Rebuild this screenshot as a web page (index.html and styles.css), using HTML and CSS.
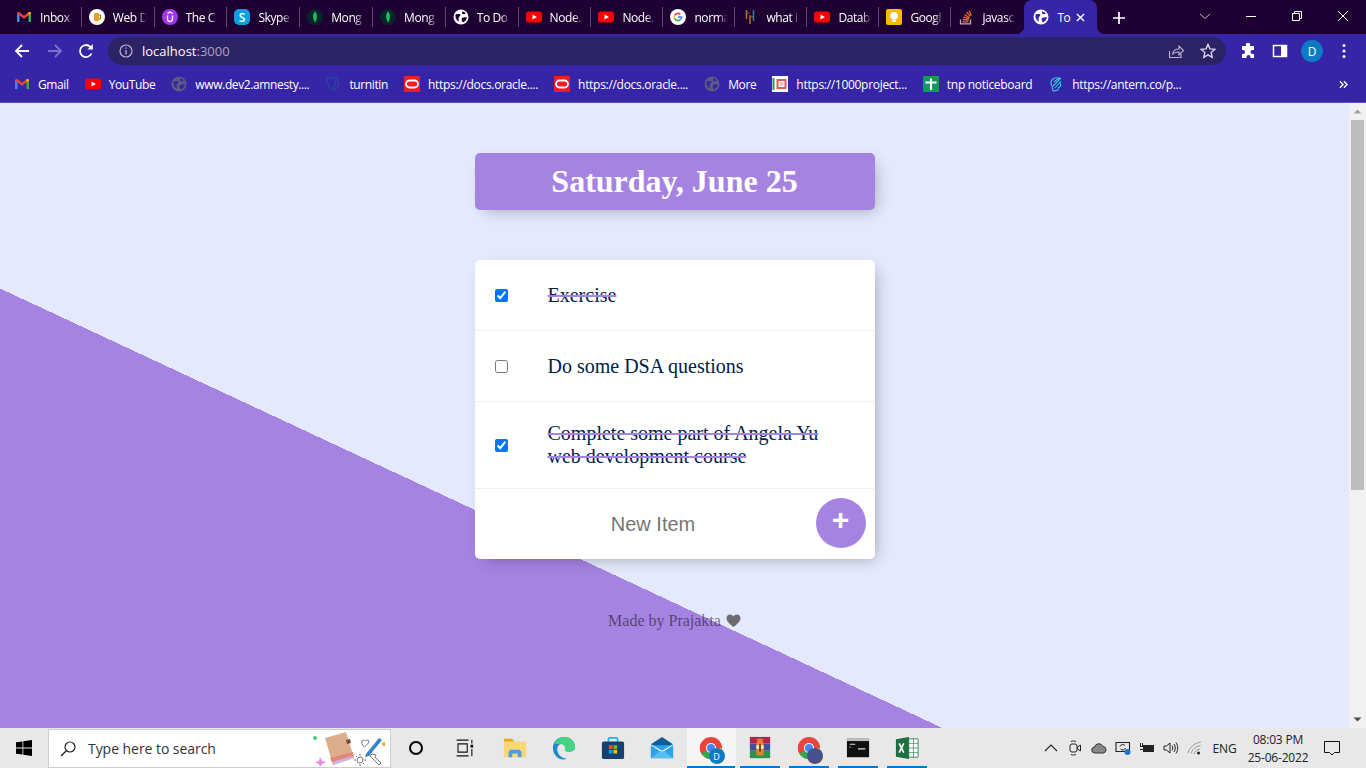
FILE: index.html
```html
<!DOCTYPE html>
<html lang="en">
<head>
  <meta charset="UTF-8">
  <meta name="viewport" content="width=device-width, initial-scale=1.0">
  <link rel="stylesheet" href="styles.css">
  <title>To Do List</title>
</head>
<body>

  <svg class="defs" aria-hidden="true">
    <symbol id="gmail" viewBox="0 0 16 16">
      <path d="M1 13V4l2.500 1.800V13z" fill="#4285f4"/>
      <path d="M15 13V4l-2.500 1.800V13z" fill="#34a853"/>
      <path d="M1 4.500C1 3 2.500 2.500 3.500 3.300L8 6.700l4.500-3.400C13.500 2.500 15 3 15 4.500L12.500 6.500 8 9.800 3.500 6.500z" fill="#ea4335"/>
      <path d="M12.500 3.300C13.500 2.500 15 3 15 4.500L12.500 6.500z" fill="#fbbc04"/>
    </symbol>
    <symbol id="youtube" viewBox="0 0 16 16">
      <rect y="2.500" width="16" height="11" rx="3" fill="#f00"/>
      <path d="M6.500 5.500v5L11 8z" fill="#fff"/>
    </symbol>
    <symbol id="globe" viewBox="0 0 16 16">
      <circle cx="8" cy="8" r="7.500" fill="currentColor"/>
      <path d="M2.500 5.500c2-1 3 0 4.500-.5 1 1 0 2-1 3-1 2 0 3 0 4.500-2-1-3-2.500-3.500-4.500zM9 9c2-1 3.500-1 5-.5-.5 2-2 4-4 5-1-1-2-3-1-4.500zM9 2.500c1.500 0 3 .8 3.800 2-1 1-2.800 1-3.800 0z" fill="var(--land)"/>
    </symbol>
    <symbol id="oracle" viewBox="0 0 16 16">
      <rect width="16" height="16" fill="#ee1c25"/>
      <rect x="2" y="4.500" width="12" height="7" rx="3.500" fill="none" stroke="#fff" stroke-width="1.800"/>
    </symbol>
    <symbol id="mongo" viewBox="0 0 16 16">
      <circle cx="8" cy="8" r="8" fill="#07262b"/>
      <path d="M8 2.500C10.500 5 10.500 9.500 8 13.500 5.500 9.500 5.500 5 8 2.500z" fill="#13c55c"/>
    </symbol>
    <symbol id="chrome" viewBox="0 0 26 26">
      <circle cx="13" cy="13" r="12" fill="#e8453c"/>
      <path d="M13 13L2.600 19A12 12 0 0 1 3 6.300z" fill="#e8453c"/>
      <path d="M13 13h12a12 12 0 0 1-12 12l-2-1z" fill="#f9bc15"/>
      <path d="M13 13L19 23.400A12 12 0 0 1 2.600 19z" fill="#34a853"/>
      <circle cx="13" cy="13" r="5.500" fill="#fff"/>
      <circle cx="13" cy="13" r="4.300" fill="#4285f4"/>
    </symbol>
  </svg>

  <div class="tabstrip">
    <div class="tab"><svg class="ico"><use href="#gmail"/></svg><span class="tab-name">Inbox</span></div>
    <div class="tab">
      <svg class="ico" viewBox="0 0 16 16"><circle cx="8" cy="8" r="8" fill="#fff"/><rect x="5" y="4" width="5" height="8" rx="1" fill="#e2a024"/><path d="M10 6h1.500v4H10" fill="none" stroke="#8a6a20"/></svg>
      <span class="tab-name">Web D</span>
    </div>
    <div class="tab">
      <svg class="ico" viewBox="0 0 16 16"><circle cx="8" cy="8" r="8" fill="#a435f0"/><path d="M5.500 6.500V10a2.500 2.500 0 0 0 5 0V6.500M5.500 4.500L8 3l2.500 1.500" fill="none" stroke="#fff" stroke-width="1.300"/></svg>
      <span class="tab-name">The C</span>
    </div>
    <div class="tab">
      <svg class="ico" viewBox="0 0 16 16"><rect width="16" height="16" rx="5" fill="#0a9fe0"/><text x="8" y="12.500" class="skype-s">S</text></svg>
      <span class="tab-name">Skype</span>
    </div>
    <div class="tab"><svg class="ico"><use href="#mongo"/></svg><span class="tab-name">Mong</span></div>
    <div class="tab"><svg class="ico"><use href="#mongo"/></svg><span class="tab-name">Mong</span></div>
    <div class="tab"><svg class="ico globe-tab"><use href="#globe"/></svg><span class="tab-name">To Do</span></div>
    <div class="tab"><svg class="ico"><use href="#youtube"/></svg><span class="tab-name">Node.</span></div>
    <div class="tab"><svg class="ico"><use href="#youtube"/></svg><span class="tab-name">Node.</span></div>
    <div class="tab">
      <svg class="ico" viewBox="0 0 16 16"><circle cx="8" cy="8" r="8" fill="#fff"/><path d="M8 3.500a4.500 4.500 0 0 1 3 1.200l-1.200 1.200A2.800 2.800 0 0 0 5.400 7L4 6a4.500 4.500 0 0 1 4-2.500z" fill="#ea4335"/><path d="M4 6l1.400 1a2.800 2.800 0 0 0 0 2L4 10a4.500 4.500 0 0 1 0-4z" fill="#fbbc04"/><path d="M4 10l1.400-1A2.800 2.800 0 0 0 10 10l1.200 1A4.500 4.500 0 0 1 4 10z" fill="#34a853"/><path d="M12.500 7.200H8v1.700h2.700a2 2 0 0 1-.7 1.100l1.200 1a4.500 4.500 0 0 0 1.300-3.800z" fill="#4285f4"/></svg>
      <span class="tab-name">norma</span>
    </div>
    <div class="tab">
      <svg class="ico" viewBox="0 0 16 16"><path d="M4.500 1v9M8 6v9" stroke="#b5702c" stroke-width="1.500"/><path d="M11.500 1v11" stroke="#2f86a8" stroke-width="1.500"/><path d="M4.500 4h3M8 8h3.500" stroke="#8a6a40"/></svg>
      <span class="tab-name">what i</span>
    </div>
    <div class="tab"><svg class="ico"><use href="#youtube"/></svg><span class="tab-name">Datab</span></div>
    <div class="tab">
      <svg class="ico" viewBox="0 0 16 16"><rect width="16" height="16" rx="2" fill="#fbb900"/><circle cx="8" cy="6.800" r="3.800" fill="#fff"/><rect x="6.200" y="10.500" width="3.600" height="2.500" fill="#fff"/></svg>
      <span class="tab-name">Googl</span>
    </div>
    <div class="tab tab-last">
      <svg class="ico" viewBox="0 0 16 16"><path d="M2.500 10.500v4.300h10v-4.300" fill="none" stroke="#b9b4b0" stroke-width="1.300"/><path d="M4.500 12.800h6M4.700 10.500l6 .5M5.300 8.200l5.800 1.500M6.500 5.800l5.200 3M8.500 3.200l4 4.200M11 1.500l2.300 5" stroke="#e8711d" stroke-width="1.300"/></svg>
      <span class="tab-name">javasc</span>
    </div>
    <div class="tab-active">
      <svg class="ico globe-active"><use href="#globe"/></svg>
      <span class="tab-name">To</span>
      <svg class="tab-close" viewBox="0 0 10 10"><path d="M1 1l8 8M9 1l-8 8" stroke="#fff" stroke-width="1.500"/></svg>
    </div>
    <svg class="new-tab" viewBox="0 0 12 12"><path d="M6 0v12M0 6h12" stroke="#fff" stroke-width="1.700"/></svg>
    <div class="win-controls">
      <button class="win-btn"><svg viewBox="0 0 12 12"><path d="M1 4l5 4.500L11 4" fill="none" stroke="#bdb4c4"/></svg></button>
      <button class="win-btn"><svg viewBox="0 0 12 12"><path d="M1 6.500h10" stroke="#fff"/></svg></button>
      <button class="win-btn"><svg viewBox="0 0 12 12"><path d="M1.500 3.500h7v7h-7zM3.500 3.500v-2h7v7h-2" fill="none" stroke="#fff"/></svg></button>
      <button class="win-btn"><svg viewBox="0 0 12 12"><path d="M1 1l10 10M11 1L1 11" stroke="#fff"/></svg></button>
    </div>
  </div>

  <div class="toolbar">
    <svg class="tool-ico" viewBox="0 0 16 16"><path d="M15 8H2M8 2L2 8l6 6" fill="none" stroke="#fff" stroke-width="1.800"/></svg>
    <svg class="tool-ico" viewBox="0 0 16 16"><path d="M1 8h13M8 2l6 6-6 6" fill="none" stroke="#7c70c8" stroke-width="1.800"/></svg>
    <svg class="tool-ico reload" viewBox="0 0 16 16"><path d="M13.500 10.500A6 6 0 1 1 12.300 3.800L14 5.500" fill="none" stroke="#fff" stroke-width="1.800"/><path d="M14.800 1v5.500H9.300z" fill="#fff"/></svg>
    <div class="omnibox">
      <svg class="info" viewBox="0 0 14 14"><circle cx="7" cy="7" r="6" fill="none" stroke="#b9b5d0" stroke-width="1.200"/><path d="M7 6v4.500M7 3.500v1.300" stroke="#b9b5d0" stroke-width="1.300"/></svg>
      <span class="url">localhost<span class="url-port">:3000</span></span>
      <svg class="omni-ico" viewBox="0 0 16 16"><path d="M1.500 8v6.500h11.500V11" fill="none" stroke="#b9b5d0" stroke-width="1.100"/><path d="M4.500 11.500c.5-3.500 3-5.500 6.500-5.500V3l4.500 4.500L11 12V9c-2.500 0-5 .5-6.500 2.500z" fill="none" stroke="#b9b5d0" stroke-width="1.100"/></svg>
      <svg class="omni-ico" viewBox="0 0 16 16"><path d="M8 1.500l2 4.400 4.800.5-3.600 3.200 1 4.700L8 11.900l-4.200 2.400 1-4.700L1.200 6.400 6 5.900z" fill="none" stroke="#d8d5e8" stroke-width="1.400"/></svg>
    </div>
    <div class="tool-right">
      <svg class="tool-ico" viewBox="0 0 16 16"><path d="M6 1.500a2 2 0 0 1 4 0V3h4v4h-1.500a2 2 0 0 0 0 4H14v4h-3.500v-1a2 2 0 0 0-4 0v1H2v-4h1a2 2 0 0 0 0-4H2V3h4z" fill="#fff"/></svg>
      <svg class="tool-ico" viewBox="0 0 16 16"><rect x="1.500" y="2.500" width="13" height="11" fill="none" stroke="#fff" stroke-width="1.500"/><rect x="9" y="2.500" width="5.500" height="11" fill="#fff"/></svg>
      <span class="avatar">D</span>
      <svg class="tool-ico" viewBox="0 0 16 16"><circle cx="8" cy="2.500" r="1.500" fill="#fff"/><circle cx="8" cy="8" r="1.500" fill="#fff"/><circle cx="8" cy="13.500" r="1.500" fill="#fff"/></svg>
    </div>
  </div>

  <div class="bookmarks">
    <a class="bm"><svg class="ico"><use href="#gmail"/></svg>Gmail</a>
    <a class="bm"><svg class="ico"><use href="#youtube"/></svg>YouTube</a>
    <a class="bm"><svg class="ico globe-bm"><use href="#globe"/></svg>www.dev2.amnesty....</a>
    <a class="bm">
      <svg class="ico" viewBox="0 0 16 16"><path d="M2 2.500l7-1.500 2 1-1 7-3 4-3-1.500zM11 3c4 2 3 9-3 12" fill="none" stroke="#1d4f9c" stroke-width="1.100"/></svg>
      turnitin
    </a>
    <a class="bm bm-url"><svg class="ico"><use href="#oracle"/></svg>https://docs.oracle....</a>
    <a class="bm bm-url"><svg class="ico"><use href="#oracle"/></svg>https://docs.oracle....</a>
    <a class="bm"><svg class="ico globe-bm"><use href="#globe"/></svg>More</a>
    <a class="bm bm-url">
      <svg class="ico" viewBox="0 0 16 16"><rect width="16" height="16" fill="#fff"/><path d="M1.500 2v12" stroke="#2a9a4a" stroke-width="2"/><rect x="4.500" y="3" width="10" height="10" fill="#e4574c"/><rect x="7" y="5.500" width="5" height="5" fill="#f5c6c0" stroke="#fff"/></svg>
      https://1000project...
    </a>
    <a class="bm bm-url">
      <svg class="ico" viewBox="0 0 16 16"><rect width="16" height="16" rx="1" fill="#0f9d58"/><path d="M2.500 6.500h11M8 2.500V14" stroke="#fff" stroke-width="2"/></svg>
      tnp noticeboard
    </a>
    <a class="bm bm-url">
      <svg class="ico" viewBox="0 0 16 16"><path d="M12 2.500C8 .5 3 2.500 3 7c0 2 1 3 1.500 4.500L5 15l5-1 .5-2.500 2-1V7M5 10l8-8M6 6l5-4M7 12l6-7" fill="none" stroke="#38c6d8" stroke-width="1.100"/></svg>
      https://antern.co/p...
    </a>
    <svg class="bm-more" viewBox="0 0 10 10"><path d="M1 1.500L4.500 5 1 8.500M5.500 1.500L9 5 5.500 8.500" fill="none" stroke="#fff" stroke-width="1.500"/></svg>
  </div>

  <div class="viewport">
    <div class="page">
      <div class="sheet">
        <div class="box heading">
          <h1>Saturday, June 25</h1>
        </div>

        <div class="box">
          <div class="item">
            <input type="checkbox" checked>
            <p>Exercise</p>
          </div>
          <div class="item">
            <input type="checkbox">
            <p>Do some DSA questions</p>
          </div>
          <div class="item">
            <input type="checkbox" checked>
            <p>Complete some part of Angela Yu web development course</p>
          </div>
          <form class="item new-item">
            <input type="text" placeholder="New Item">
            <button type="button">+</button>
          </form>
        </div>

        <footer>
          Made by Prajakta
          <svg class="heart" viewBox="0 0 16 14"><path d="M8 14C3 10 .5 7.500.5 4.300.5 2 2.200.5 4.300.5 5.800.5 7.200 1.300 8 2.700 8.800 1.300 10.200.5 11.700.5c2.100 0 3.800 1.500 3.800 3.800C15.500 7.500 13 10 8 14z"/></svg>
        </footer>
      </div>
    </div>
    <div class="scrollbar">
      <svg class="scroll-arrow" viewBox="0 0 17 17"><path d="M4.500 10.500L8.500 6.500l4 4z" fill="#a3a3a3"/></svg>
      <div class="scroll-track"><div class="scroll-thumb"></div></div>
      <svg class="scroll-arrow" viewBox="0 0 17 17"><path d="M4.500 6.500l4 4 4-4z" fill="#505050"/></svg>
    </div>
  </div>

  <div class="taskbar">
    <div class="start">
      <svg viewBox="0 0 16 16" width="16" height="16"><path d="M0 2.300l6.500-.9v6.200H0zM7.300 1.300L16 0v7.600H7.300zM0 8.400h6.500v6.200L0 13.700zM7.300 8.400H16V16l-8.700-1.300z" fill="#000"/></svg>
    </div>
    <div class="search">
      <svg class="search-ico" viewBox="0 0 16 16"><circle cx="10" cy="6" r="5" fill="none" stroke="#222" stroke-width="1.200"/><path d="M6.300 9.700L1 15" stroke="#222" stroke-width="1.400"/></svg>
      <span class="search-text">Type here to search</span>
      <svg class="search-art" viewBox="0 0 72 36">
        <circle cx="2" cy="7" r="2" fill="#3ed07a"/>
        <path d="M12 7L33 1l8 26-21 7z" fill="#dcae8c"/>
        <path d="M17 27l23-6 1 5-21 7z" fill="#e2877a"/>
        <path d="M19 31l21-6 1 2-21 7z" fill="#cdb4e4"/>
        <path d="M33 9l4-1 1 4-4 1z" fill="#7a4a38"/>
        <path d="M49 10c2-2 3 0 3 0s3-2 4 0c0 3-5 6-5 6s-3-3-2-6z" fill="none" stroke="#777"/>
        <path d="M53 23L66 7l3 2-13 16-4 1z" fill="#3a82c8"/>
        <circle cx="71" cy="13" r="2" fill="#f4a81c"/>
        <path d="M7 26l2 4 4 1-4 2-2 3-1-3-4-2 4-1z" fill="#e58af0"/>
        <circle cx="47" cy="29" r="3" fill="none" stroke="#777"/>
        <path d="M47 23v2M47 33v2M41 29h2M51 29h2M43 25l1 1M51 33l-1-1" stroke="#777"/>
        <path d="M57 25l3 3 6 6 2-2-6-6 1-2-4-1z" fill="none" stroke="#777"/>
      </svg>
    </div>
    <div class="task-slot"><svg class="task-ico" viewBox="0 0 26 26"><circle cx="13" cy="13" r="6.500" fill="none" stroke="#000" stroke-width="2.200"/></svg></div>
    <div class="task-slot">
      <svg class="task-ico" viewBox="0 0 26 26"><path d="M5 4.500h13M5 21.500h13M6.500 8.500h10v9h-10zM21.500 4v4M21.500 14v8" fill="none" stroke="#111" stroke-width="1.200"/><rect x="20" y="9.500" width="3" height="3" fill="#111"/></svg>
    </div>
    <div class="app-slot first-app">
      <svg class="task-ico" viewBox="0 0 26 26"><path d="M1 3h9l2 3h13v17H1z" fill="#f8d775"/><path d="M1 3h9l2 3H1z" fill="#e5a923"/><path d="M6 23v-6l2-2h10l2 2v6h-4v-4h-6v4z" fill="#4a9fdc"/></svg>
    </div>
    <div class="app-slot">
      <svg class="task-ico" viewBox="0 0 26 26"><path d="M1 13C1 6 6.500 1 13 1c7 0 12 5 12 11 0 3.500-3 5-6 5-2.500 0-5-.8-5-2.500 0-1 1-1.500 1-3 0-2-2-3-4-3-4 0-6 4-5 8 1 5 6 8.500 11 8-2 .8-3.500 1-5 1C6 25 1 20 1 13z" fill="#1b8bc9"/><path d="M3 8c2-5 7-7 11-7 6 0 11 5 11 11 0 3.500-3 5-6 5-2.500 0-5-.8-5-2.500 1-4-3-6-6-6-2 0-4 .5-5-.5z" fill="#47d27f"/></svg>
    </div>
    <div class="app-slot">
      <svg class="task-ico" viewBox="0 0 26 26"><path d="M8 7V3.500a1.500 1.500 0 0 1 1.500-1.500h7A1.500 1.500 0 0 1 18 3.500V7" fill="none" stroke="#1ab3e8" stroke-width="1.800"/><rect x="1" y="6" width="24" height="19" rx="2" fill="#15406f"/><rect x="8.500" y="10" width="4" height="4" fill="#f25022"/><rect x="13.500" y="10" width="4" height="4" fill="#7fba00"/><rect x="8.500" y="15" width="4" height="4" fill="#00a4ef"/><rect x="13.500" y="15" width="4" height="4" fill="#ffb900"/></svg>
    </div>
    <div class="app-slot">
      <svg class="task-ico" viewBox="0 0 26 26"><path d="M1 9L13 1l12 8v14H1z" fill="#0f5e9c"/><path d="M1 10h24v14H1z" fill="#2aa3ea"/><path d="M1 10l12 8 12-8v-1L13 16 1 9z" fill="#e6f4fd"/><path d="M1 24l10-8 2 1 2-1 10 8z" fill="#55bdf0"/></svg>
    </div>
    <div class="app-slot running app-active">
      <svg class="task-ico" viewBox="0 0 26 26"><use href="#chrome"/></svg>
      <span class="chrome-badge">D</span>
    </div>
    <div class="app-slot running">
      <svg class="task-ico" viewBox="0 0 26 26"><rect x="2" y="1" width="22" height="7" fill="#b2244f"/><rect x="2" y="8" width="22" height="8" fill="#40509c"/><rect x="2" y="16" width="22" height="8" fill="#2f8f4e"/><path d="M10 3h6v3l1 2v13h-8V8l1-2z" fill="#d8862c"/><rect x="9" y="10" width="8" height="4" fill="#f0e4c0"/><rect x="12" y="9" width="2" height="8" fill="#7a3a10"/></svg>
    </div>
    <div class="app-slot running">
      <svg class="task-ico" viewBox="0 0 26 26"><use href="#chrome"/></svg>
      <span class="chrome-badge chrome-badge-plain"></span>
    </div>
    <div class="app-slot running">
      <svg class="task-ico" viewBox="0 0 26 26"><rect x="1" y="3" width="24" height="20" fill="#111"/><rect x="1" y="3" width="24" height="2.500" fill="#bfbfbf"/><path d="M4 9h6M4 12h1M13 14h8" stroke="#ddd" stroke-width="1.200"/></svg>
    </div>
    <div class="app-slot running">
      <svg class="task-ico" viewBox="0 0 26 26"><path d="M9 3h16v20H9z" fill="#fff" stroke="#3a8a5c"/><path d="M15 3v20M20 3v20M9 8h16M9 13h16M9 18h16" stroke="#3a8a5c" stroke-width=".8"/><path d="M1 3.500L15 1v24L1 22.500z" fill="#1d6f42"/><path d="M4.500 8l5 10M9.500 8l-5 10" stroke="#fff" stroke-width="1.800"/></svg>
    </div>

    <div class="tray">
      <svg class="tray-ico" viewBox="0 0 16 16"><path d="M2 11l6-6 6 6" fill="none" stroke="#222" stroke-width="1.100"/></svg>
      <svg class="tray-ico" viewBox="0 0 16 16"><rect x="3" y="4" width="7" height="8" rx="2" fill="none" stroke="#222"/><path d="M10.500 7l3-2v6l-3-2zM4 1.500c2-.7 3-.7 5 0M4 14.500c2 .7 3 .7 5 0" fill="none" stroke="#222"/></svg>
      <svg class="tray-ico" viewBox="0 0 16 16"><path d="M4 13a3 3 0 0 1-.5-6A4.500 4.500 0 0 1 12 6.500 3.300 3.300 0 0 1 12.500 13z" fill="#888" stroke="#333"/></svg>
      <svg class="tray-ico" viewBox="0 0 16 16"><path d="M1 2.500h13.500v9H1z" fill="none" stroke="#222" stroke-width="1.100"/><path d="M5 6.500a3 3 0 0 1 5-1M10.500 8a3 3 0 0 1-5 1" fill="none" stroke="#222"/><circle cx="12.500" cy="12" r="3" fill="#1a73c8"/></svg>
      <svg class="tray-ico" viewBox="0 0 16 16"><rect x="4" y="5" width="11" height="7" fill="#222"/><path d="M1 6.500h3M1 9.500h3M1.500 3v3M3.500 3v3" stroke="#222" fill="none"/></svg>
      <svg class="tray-ico" viewBox="0 0 16 16"><path d="M1 6v4h2.500L7 13V3L3.500 6zM9 5.500c1 1.500 1 3.500 0 5M11 4c1.700 2.500 1.700 5.500 0 8M13 2.500c2.300 3.500 2.300 7.500 0 11" fill="none" stroke="#222"/></svg>
      <svg class="tray-ico" viewBox="0 0 16 16"><path d="M1 13C2 8 7 3 14 2M4 13.500c1-3.500 4-7 9.500-8M7 14c.6-2 2.500-4.500 6-5" fill="none" stroke="#999"/><circle cx="11.500" cy="13" r="1.500" fill="#222"/></svg>
      <span class="tray-lang">ENG</span>
      <div class="clock">
        <span>08:03 PM</span>
        <span>25-06-2022</span>
      </div>
      <div class="notif">
        <svg viewBox="0 0 16 16" width="16" height="16"><path d="M.5 1.500h15v11h-5l-2.500 2.500-2.500-2.500h-5z" fill="none" stroke="#111"/></svg>
      </div>
    </div>
  </div>

</body>
</html>
```
FILE: styles.css
```css
html, body {
  height: 100%;
}

body {
  margin: 0;
  display: flex;
  flex-direction: column;
  height: 768px;
  overflow: hidden;
  font-family: 'Open Sans', 'Noto Sans', sans-serif;
}

.defs {
  display: none;
}

.ico {
  width: 16px;
  height: 16px;
  flex: none;
}

/* browser tabs */
.tabstrip {
  display: flex;
  align-items: center;
  height: 34px;
  flex: none;
  padding-left: 9px;
  background: #1f0033;
  color: #fff;
}

.tab {
  display: flex;
  align-items: center;
  gap: 8px;
  width: 72.8px;
  height: 20px;
  padding-left: 7px;
  box-sizing: border-box;
  border-right: 1px solid #5d4a6c;
}

.tab:nth-child(n+9) {
  width: 72px;
}

.tab.tab-last {
  width: 73px;
  border-right: none;
}

.tab-name {
  width: 34px;
  overflow: hidden;
  white-space: nowrap;
  font-size: 12px;
  letter-spacing: -0.4px;
  -webkit-mask-image: linear-gradient(90deg, #000 70%, transparent);
  mask-image: linear-gradient(90deg, #000 70%, transparent);
}

.globe-tab {
  color: #fff;
  --land: #1f0033;
}

.globe-active {
  color: #fff;
  --land: #3725a8;
}

.globe-bm {
  color: #5c5a80;
  --land: #3725a8;
}

.skype-s {
  font-family: 'Open Sans', sans-serif;
  font-size: 12px;
  font-weight: 600;
  text-anchor: middle;
  fill: #fff;
}

.tab-active {
  position: relative;
  display: flex;
  align-items: center;
  gap: 8px;
  align-self: flex-end;
  height: 34px;
  width: 73px;
  padding-left: 9px;
  box-sizing: border-box;
  border-radius: 8px 8px 0 0;
  background: #3725a8;
}

.tab-active::before,
.tab-active::after {
  content: "";
  position: absolute;
  bottom: 0;
  width: 8px;
  height: 8px;
}

.tab-active::before {
  left: -8px;
  background: radial-gradient(circle at 0 0, transparent 8px, #3725a8 8.500px);
}

.tab-active::after {
  right: -8px;
  background: radial-gradient(circle at 100% 0, transparent 8px, #3725a8 8.500px);
}

.tab-active .tab-name {
  width: 14px;
  -webkit-mask-image: none;
  mask-image: none;
}

.tab-close {
  width: 9px;
  height: 9px;
  margin-left: -3px;
}

.new-tab {
  width: 12px;
  height: 12px;
  margin-left: 16px;
  margin-top: 1px;
}

.win-controls {
  display: flex;
  margin-left: auto;
}

.win-btn {
  width: 46px;
  height: 30px;
  padding: 0;
  border: none;
  background: none;
}

.win-btn svg {
  width: 12px;
  height: 12px;
}

/* address bar */
.toolbar {
  display: flex;
  align-items: center;
  height: 33px;
  flex: none;
  padding: 1px 0 0 14px;
  box-sizing: border-box;
  gap: 17px;
  background: #3725a8;
}

.tool-ico {
  width: 16px;
  height: 16px;
  flex: none;
}

.reload {
  margin-left: -2px;
}

.omnibox {
  display: flex;
  align-items: center;
  width: 1118px;
  height: 28px;
  margin-left: -3px;
  padding: 0 10px 0 11px;
  box-sizing: border-box;
  border-radius: 14px;
  background: #2c2266;
}

.info {
  width: 14px;
  height: 14px;
}

.url {
  margin-left: 9px;
  margin-right: auto;
  font-size: 13px;
  color: #fff;
}

.url-port {
  color: #a9a5c4;
}

.omni-ico {
  width: 16px;
  height: 16px;
  margin-left: 16px;
}

.tool-right {
  display: flex;
  align-items: center;
  gap: 16px;
  margin-left: -3px;
}

.avatar {
  display: flex;
  align-items: center;
  justify-content: center;
  width: 22px;
  height: 22px;
  margin: 0 -3px;
  border-radius: 50%;
  background: #0b7cc4;
  color: #fff;
  font-size: 12px;
}

/* bookmarks */
.bookmarks {
  display: flex;
  align-items: center;
  gap: 16px;
  height: 36px;
  flex: none;
  padding: 0 0 1px 14px;
  box-sizing: border-box;
  border-bottom: 1px solid #5a4ec0;
  background: #3725a8;
}

.bm {
  display: flex;
  align-items: center;
  gap: 8px;
  color: #fff;
  font-size: 12px;
  letter-spacing: -0.38px;
  white-space: nowrap;
}

.bm-url {
  letter-spacing: -0.3px;
}

.bm-more {
  width: 9px;
  height: 9px;
  margin-left: auto;
  margin-right: 18px;
}

/* the page itself */
.viewport {
  display: flex;
  flex: 1;
  min-height: 0;
}

.page {
  flex: 1;
  overflow: hidden;
}

.sheet {
  display: flow-root;
  min-height: 1000px;
  background-color: #e4e9fd;
  background-image: linear-gradient(25deg, #a683e3 50%, #e4e9fd 50%);
  font-family: 'Liberation Serif', serif;
}

.box {
  max-width: 400px;
  margin: 50px auto;
  border-radius: 5px;
  background: white;
  box-shadow: 5px 5px 15px -5px rgba(0, 0, 0, 0.3);
}

.heading {
  background-color: #a683e3;
  text-align: center;
}

h1 {
  margin: 0;
  padding: 10px;
  color: #fff;
  font-size: 32px;
}

.item {
  display: flex;
  align-items: center;
  min-height: 70px;
  border-bottom: 1px solid #f1f1f1;
}

.item:last-child {
  border-bottom: 0;
}

input[type="checkbox"] {
  margin: 20px;
  flex: none;
}

p {
  margin: 0;
  padding: 20px;
  color: #00204a;
  font-size: 20px;
  font-weight: 200;
}

input:checked + p {
  text-decoration: line-through;
  text-decoration-color: #a683e3;
}

.new-item {
  gap: 4px;
  margin-left: 20px;
}

input[type="text"] {
  width: 313px;
  height: 60px;
  padding: 1px 2px;
  border: none;
  outline: none;
  text-align: center;
  font-family: 'Liberation Sans', sans-serif;
  font-size: 20px;
}

.new-item button {
  width: 50px;
  min-height: 50px;
  margin-bottom: 2px;
  padding: 0 0 6px;
  border: none;
  border-radius: 50%;
  background-color: #a683e3;
  color: #fff;
  font-family: 'Liberation Sans', sans-serif;
  font-size: 30px;
  font-weight: 700;
}

footer {
  padding-top: 3px;
  color: rgba(0, 0, 0, 0.5);
  font-size: 16px;
  text-align: center;
}

.heart {
  width: 15px;
  height: 13px;
  margin-left: 1px;
  vertical-align: -1px;
  fill: #6c6c70;
}

/* scrollbar */
.scrollbar {
  display: flex;
  flex-direction: column;
  width: 17px;
  flex: none;
  background: #f1f1f1;
}

.scroll-arrow {
  width: 17px;
  height: 17px;
  flex: none;
}

.scroll-track {
  flex: 1;
  padding: 0 2px;
}

.scroll-thumb {
  height: 370px;
  background: #bdbdbd;
}

/* windows taskbar */
.taskbar {
  display: flex;
  align-items: center;
  height: 40px;
  flex: none;
  background: #e8e8e8;
}

.start {
  display: flex;
  align-items: center;
  justify-content: center;
  width: 48px;
  height: 100%;
  flex: none;
}

.search {
  display: flex;
  align-items: center;
  width: 343px;
  height: 39px;
  flex: none;
  margin-top: 1px;
  box-sizing: border-box;
  border: 1px solid #ccc;
  background: #fff;
}

.search-ico {
  width: 16px;
  height: 16px;
  margin-left: 11px;
}

.search-text {
  margin-left: 12px;
  color: #333;
  font-size: 14px;
  letter-spacing: -0.05px;
}

.search-art {
  width: 72px;
  height: 36px;
  margin-left: auto;
  margin-right: 5px;
}

.search + .task-slot {
  margin-left: 1px;
}

.task-slot {
  display: flex;
  align-items: center;
  justify-content: center;
  width: 48px;
  height: 100%;
  flex: none;
}

.app-slot {
  position: relative;
  display: flex;
  align-items: center;
  justify-content: center;
  width: 49px;
  height: 100%;
  flex: none;
  box-sizing: border-box;
}

.first-app {
  margin-left: 2.500px;
}

.task-ico {
  width: 24px;
  height: 24px;
  margin-top: -1px;
}

.running {
  background-image: linear-gradient(#0078d4, #0078d4);
  background-repeat: no-repeat;
  background-size: 40px 2px;
  background-position: center bottom;
}

.app-active {
  background-color: #f5f5f5;
  background-size: 48px 2px;
}

.chrome-badge {
  position: absolute;
  left: 22px;
  top: 20px;
  display: flex;
  align-items: center;
  justify-content: center;
  width: 16px;
  height: 16px;
  border-radius: 50%;
  background: #0b7cc4;
  color: #fff;
  font-size: 9px;
}

.chrome-badge-plain {
  background: #44538c;
}

.tray {
  display: flex;
  align-items: center;
  height: 100%;
  margin-left: auto;
  color: #222;
  font-size: 12px;
}

.tray-ico {
  width: 16px;
  height: 16px;
  padding: 0 4px;
}

.tray-lang {
  width: 35px;
  letter-spacing: -0.2px;
  text-align: center;
}

.clock {
  display: flex;
  flex-direction: column;
  align-items: center;
  gap: 1px;
  width: 72px;
  letter-spacing: -0.2px;
  line-height: 17px;
}

.notif {
  display: flex;
  align-items: center;
  justify-content: center;
  width: 36px;
  margin-right: 16px;
}
```
